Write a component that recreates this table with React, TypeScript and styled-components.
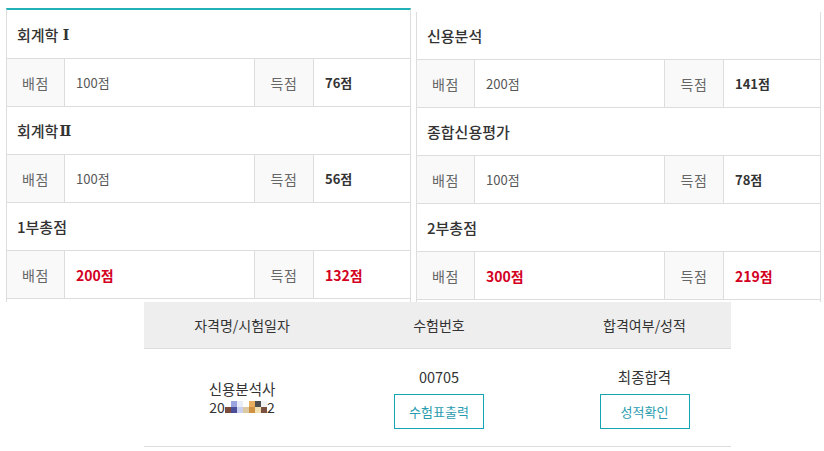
import styled, { createGlobalStyle, css } from 'styled-components'

const GlobalStyle = createGlobalStyle`
  body {
    margin: 0;
    background: #fff;
    font-family: 'Noto Sans CJK KR', 'Noto Sans', sans-serif;
    color: #333;
  }
`

type ScoreRow = {
  title: string
  numeral?: string
  total: string
  score: string
  summary?: boolean
}

const leftRows: ScoreRow[] = [
  { title: '회계학 ', numeral: 'Ⅰ', total: '100점', score: '76점' },
  { title: '회계학', numeral: 'Ⅱ', total: '100점', score: '56점' },
  { title: '1부총점', total: '200점', score: '132점', summary: true },
]

const rightRows: ScoreRow[] = [
  { title: '신용분석', total: '200점', score: '141점' },
  { title: '종합신용평가', total: '100점', score: '78점' },
  { title: '2부총점', total: '300점', score: '219점', summary: true },
]

// pixelated (censored) part of the exam date
const mosaic = [
  ['#ffffff', '#7b4b3b'],
  ['#9aa4de', '#4b4f98'],
  ['#e9edf8', '#c9d0ef'],
  ['#ffffff', '#dcc9a2'],
  ['#e6ae5e', '#cf9142'],
  ['#4f4f4f', '#f1e1b2'],
  ['#f2f2f2', '#7a5141'],
]

const Mosaic = () => (
  <svg width={42} height={12} viewBox='0 0 42 12'>
    {mosaic.map(([top, bottom], i) => (
      <g key={i}>
        <rect x={i * 6} y={0} width={6} height={6} fill={top} />
        <rect x={i * 6} y={6} width={6} height={6} fill={bottom} />
      </g>
    ))}
  </svg>
)

const ScorePanel = ({ rows, accent }: { rows: ScoreRow[]; accent?: boolean }) => (
  <StyledPanel accent={accent}>
    {rows.map(row => (
      <div key={row.title + (row.numeral || '')}>
        <StyledTitleRow>
          {row.title}
          {row.numeral && <StyledNumeral>{row.numeral}</StyledNumeral>}
        </StyledTitleRow>
        <StyledScoreRow>
          <StyledLabel>배점</StyledLabel>
          <StyledValue summary={row.summary}>{row.total}</StyledValue>
          <StyledLabel>득점</StyledLabel>
          <StyledValue strong summary={row.summary} last>
            {row.score}
          </StyledValue>
        </StyledScoreRow>
      </div>
    ))}
  </StyledPanel>
)

const App = () => {
  return (
    <>
      <GlobalStyle />
      <StyledPanels>
        <ScorePanel rows={leftRows} accent />
        <ScorePanel rows={rightRows} />
      </StyledPanels>

      <StyledResult>
        <StyledResultHead>
          <StyledCell>자격명/시험일자</StyledCell>
          <StyledCell>수험번호</StyledCell>
          <StyledCell shift>합격여부/성적</StyledCell>
        </StyledResultHead>
        <StyledResultBody>
          <StyledCell>
            <StyledLine>신용분석사</StyledLine>
            <StyledDate>
              <span>20</span>
              <Mosaic />
              <span>2</span>
            </StyledDate>
          </StyledCell>
          <StyledCell>
            <StyledNumber>00705</StyledNumber>
            <StyledOutlineButton>수험표출력</StyledOutlineButton>
          </StyledCell>
          <StyledCell shift>
            <StyledNumber>최종합격</StyledNumber>
            <StyledOutlineButton>성적확인</StyledOutlineButton>
          </StyledCell>
        </StyledResultBody>
      </StyledResult>
    </>
  )
}

export default App

const StyledPanels = styled.div`
  display: flex;
  align-items: flex-start;
  gap: 5px;
  padding: 8px 0 0 6px;
`

const StyledPanel = styled.div<{ accent?: boolean }>`
  box-sizing: border-box;
  width: 405px;
  border-left: 1px solid #ddd;
  border-right: 1px solid #ddd;
  padding-bottom: 2px;
  margin-top: 4px;

  ${p =>
    p.accent &&
    css`
      margin-top: 0;
      padding-top: 1px;
      padding-bottom: 3px;
      border-top: 2px solid #1fb1b6;
    `};
`

const StyledTitleRow = styled.div`
  box-sizing: border-box;
  height: 48px;
  display: flex;
  align-items: center;
  padding-left: 10px;
  border-bottom: 1px solid #ddd;
  font-size: 15px;
  font-weight: 500;
  color: #333;
  white-space: pre;
`

const StyledNumeral = styled.span`
  font-family: 'DejaVu Serif', 'Liberation Serif', serif;
  font-size: 14px;
  font-weight: 700;
  color: #333;
  margin-left: 1px;
`

const StyledScoreRow = styled.div`
  display: grid;
  grid-template-columns: 58px 190px 59px 1fr;
  height: 48px;
  box-sizing: border-box;
  border-bottom: 1px solid #ddd;
`

const StyledLabel = styled.div`
  display: flex;
  align-items: center;
  justify-content: center;
  background: #f9f9f9;
  border-right: 1px solid #ddd;
  font-size: 14px;
  color: #666;
  letter-spacing: 0.5px;
`

const StyledValue = styled.div<{ strong?: boolean; summary?: boolean; last?: boolean }>`
  display: flex;
  align-items: center;
  padding-left: 11px;
  border-right: ${p => (p.last ? 'none' : '1px solid #ddd')};
  font-size: 13px;
  color: #555;

  ${p =>
    p.strong &&
    css`
      font-weight: 700;
      color: #333;
    `};

  ${p =>
    p.summary &&
    css`
      font-size: 14px;
      font-weight: 700;
      color: #d3001f;
    `};
`

const StyledResult = styled.div`
  width: 587px;
  margin-left: 144px;
`

const StyledResultHead = styled.div`
  display: grid;
  grid-template-columns: 196px 198px 1fr;
  height: 47px;
  box-sizing: border-box;
  background: #eee;
  border-bottom: 1px solid #ddd;
  font-size: 14px;
  color: #333;
`

const StyledResultBody = styled.div`
  display: grid;
  grid-template-columns: 196px 198px 1fr;
  height: 98px;
  box-sizing: border-box;
  border-bottom: 1px solid #ddd;
  font-size: 14px;
  color: #333;
`

const StyledCell = styled.div<{ shift?: boolean }>`
  display: flex;
  flex-direction: column;
  align-items: center;
  justify-content: center;
  padding-left: ${p => (p.shift ? '20px' : '0')};
`

const StyledLine = styled.div`
  line-height: 19px;
  font-size: 14.5px;
`

const StyledDate = styled.div`
  display: flex;
  align-items: center;
  height: 19px;
  font-size: 14px;
  color: #333;
`

const StyledNumber = styled.div`
  line-height: 20px;
  font-size: 14.5px;
  margin-bottom: 7px;
`

const StyledOutlineButton = styled.button`
  box-sizing: border-box;
  width: 90px;
  height: 35px;
  padding: 0;
  background: #fff;
  border: 1px solid #15a5b2;
  font-family: inherit;
  font-size: 13px;
  color: #2a9cb0;
  cursor: pointer;
`
